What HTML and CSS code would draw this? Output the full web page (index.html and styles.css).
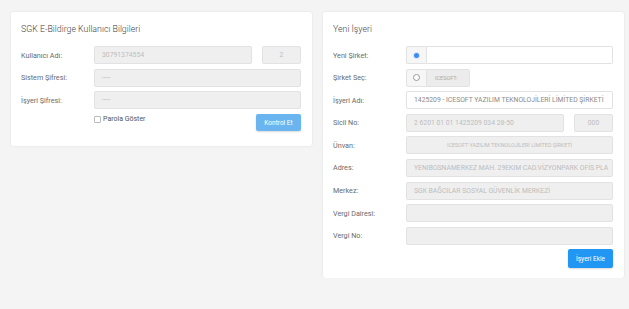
FILE: index.html
```html
<!DOCTYPE html>
<html>
<head>
    <title>SGK İşyeri</title>
    <link rel="stylesheet" href="styles.css">
</head>
<body>
    <div class="page">
        <!-- SGK login card -->
        <div class="card">
            <div class="card-title">SGK E-Bildirge Kullanıcı Bilgileri</div>
            <div class="form">
                <div class="row">
                    <label>Kullanıcı Adı:</label>
                    <div class="field disabled grow">30791374554</div>
                    <div class="field disabled short">2</div>
                </div>
                <div class="row">
                    <label>Sistem Şifresi:</label>
                    <div class="field disabled grow dots">•••••</div>
                </div>
                <div class="row">
                    <label>İşyeri Şifresi:</label>
                    <div class="field disabled grow dots">•••••</div>
                </div>
                <div class="row actions">
                    <label></label>
                    <div class="check"><span class="box"></span>Parola Göster</div>
                    <button class="btn btn-light">Kontrol Et</button>
                </div>
            </div>
        </div>

        <!-- new workplace card -->
        <div class="card">
            <div class="card-title">Yeni İşyeri</div>
            <div class="form">
                <div class="row">
                    <label>Yeni Şirket:</label>
                    <div class="group grow">
                        <span class="addon"><span class="radio on"></span></span>
                        <div class="field plain grow"></div>
                    </div>
                </div>
                <div class="row">
                    <label>Şirket Seç:</label>
                    <div class="group">
                        <span class="addon"><span class="radio"></span></span>
                        <span class="addon tag">ICESOFT-</span>
                    </div>
                </div>
                <div class="row">
                    <label>İşyeri Adı:</label>
                    <div class="field plain grow dark">1425209 - ICESOFT YAZILIM TEKNOLOJİLERİ LİMİTED ŞİRKETİ</div>
                </div>
                <div class="row">
                    <label>Sicil No:</label>
                    <div class="field disabled grow">2 6201 01 01 1425209 034 28-50</div>
                    <div class="field disabled short">000</div>
                </div>
                <div class="row">
                    <label>Ünvan:</label>
                    <div class="field disabled grow centered">ICESOFT YAZILIM TEKNOLOJİLERİ LİMİTED ŞİRKETİ</div>
                </div>
                <div class="row">
                    <label>Adres:</label>
                    <div class="field disabled grow">YENIBOSNAMERKEZ MAH. 29EKIM CAD.VİZYONPARK OFİS PLA</div>
                </div>
                <div class="row">
                    <label>Merkez:</label>
                    <div class="field disabled grow">SGK BAĞCILAR SOSYAL GÜVENLİK MERKEZİ</div>
                </div>
                <div class="row">
                    <label>Vergi Dairesi:</label>
                    <div class="field disabled grow"></div>
                </div>
                <div class="row">
                    <label>Vergi No:</label>
                    <div class="field disabled grow"></div>
                </div>
                <div class="row right">
                    <button class="btn btn-primary">İşyeri Ekle</button>
                </div>
            </div>
        </div>
    </div>
</body>
</html>
```

FILE: styles.css
```css
body {
    margin: 0;
    font-family: Roboto, 'Liberation Sans', sans-serif;
    background-color: #f4f4f4;
    color: #555;
}

.page {
    display: grid;
    grid-template-columns: 301px 301px;
    gap: 11px;
    align-items: start;
    padding: 12px 5px 0 11px;
}

.card {
    background-color: #fff;
    border-radius: 3px;
    box-shadow: 0 0 3px rgba(0, 0, 0, 0.08);
    padding: 10px 11px 10px 10px;
}

.card:first-child {
    padding-bottom: 15px;
}

.card-title {
    font-size: 8.8px;
    line-height: 14px;
    color: #444;
    font-weight: 300;
    margin-bottom: 10px;
}

.form {
    display: flex;
    flex-direction: column;
    gap: 4.6px;
}

.row {
    display: flex;
    align-items: center;
    gap: 10px;
    height: 18px;
}

.row label {
    width: 63px;
    flex: none;
    font-size: 7.2px;
    color: #6a6a6a;
}

.grow {
    flex: 1;
}

.field {
    box-sizing: border-box;
    height: 18px;
    border: 1px solid #e2e2e2;
    border-radius: 2px;
    font-size: 6.8px;
    line-height: 16px;
    padding: 0 7px;
    white-space: nowrap;
    overflow: hidden;
    color: #bdbdbd;
}

.disabled {
    background-color: #efefef;
}

.plain {
    background-color: #fff;
}

.dark {
    color: #8a8a8a;
}

.centered {
    text-align: center;
    font-size: 5.4px;
}

.short {
    width: 39px;
    flex: none;
    text-align: center;
    padding: 0;
}

.dots {
    font-size: 5px;
}

.group {
    display: flex;
    height: 18px;
}

.group .field {
    border-radius: 0 2px 2px 0;
    border-left: none;
}

.addon {
    box-sizing: border-box;
    height: 18px;
    width: 21px;
    border: 1px solid #e2e2e2;
    background-color: #f6f6f6;
    display: flex;
    align-items: center;
    justify-content: center;
    border-radius: 2px 0 0 2px;
}

.addon.tag {
    width: 43px;
    border-left: none;
    border-radius: 0 2px 2px 0;
    background-color: #ececec;
    font-size: 5.5px;
    color: #aaa;
    justify-content: flex-start;
    padding-left: 8px;
}

.radio {
    box-sizing: border-box;
    width: 7px;
    height: 7px;
    border: 0.7px solid #999;
    border-radius: 50%;
    background-color: #fff;
}

.radio.on {
    width: 5px;
    height: 5px;
    border: none;
    background-color: #3d8af7;
    box-shadow: 0 0 0 1px #d6e6fb;
}

.actions {
    align-items: flex-start;
    height: 17px;
    margin-top: 0.4px;
}

.check {
    flex: 1;
    font-size: 7px;
    color: #555;
    display: flex;
    align-items: center;
    gap: 2px;
    line-height: 10px;
}

.box {
    display: inline-block;
    box-sizing: border-box;
    width: 7px;
    height: 7px;
    border: 1px solid #bbb;
    border-radius: 1px;
}

.btn {
    font-family: Roboto, 'Liberation Sans', sans-serif;
    border: none;
    border-radius: 2px;
    color: #fff;
    font-size: 6.5px;
    height: 18px;
    padding: 0 4px;
    box-shadow: 0 1px 2px rgba(0, 0, 0, 0.15);
}

.btn-light {
    background-color: #6ab5f0;
    width: 45px;
    height: 17px;
}

.btn-primary {
    background-color: #2196f3;
    width: 45px;
    height: 19px;
}

.right {
    justify-content: flex-end;
    height: 19px;
}
```
